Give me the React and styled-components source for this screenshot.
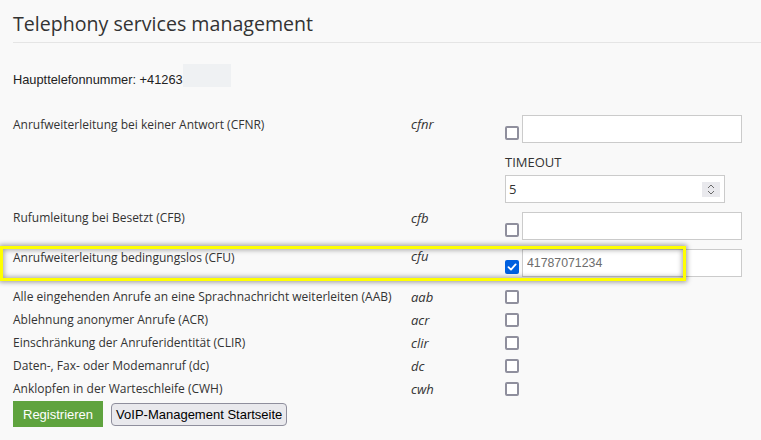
import React from 'react';
import styled, { createGlobalStyle } from 'styled-components';

const Global = createGlobalStyle`
  html, body { margin: 0; padding: 0; background: #f9f9f9; }
  body { font-family: 'Open Sans', sans-serif; color: #333; }
  * { box-sizing: border-box; }
`;

const Page = styled.div`
  width: 761px;
  height: 440px;
  overflow: hidden;
  padding-left: 13px;
`;

const Title = styled.h1`
  margin: 0;
  padding: 10px 0 4px;
  font-family: 'Open Sans', sans-serif;
  font-weight: 400;
  font-size: 19.6px;
  line-height: 28px;
  color: #333;
  border-bottom: 1px solid #e5e5e5;
`;

const PhoneRow = styled.div`
  display: flex;
  align-items: flex-end;
  height: 23px;
  margin-top: 21px;
  font-family: 'Liberation Sans', Arial, sans-serif;
  font-size: 12.8px;
  line-height: 15px;
  color: #222;
`;

const Redacted = styled.span`
  display: inline-block;
  width: 48px;
  height: 23px;
  background: #eff1f3;
`;

const Row = styled.div`
  position: relative;
  display: grid;
  grid-template-columns: 398px 94px 1fr;
  align-items: ${p => (p.$center ? 'center' : 'start')};
  margin-top: ${p => p.$top || 0}px;
  min-height: ${p => p.$height || 0}px;
`;

const Label = styled.div`
  font-size: 12px;
  line-height: 18px;
  color: #333;
  margin-top: ${p => p.$offset || 0}px;
`;

const Code = styled.div`
  font-style: italic;
  font-size: 13px;
  line-height: 18px;
  color: #333;
  margin-top: ${p => p.$offset || 0}px;
`;

const Controls = styled.div`
  display: flex;
  flex-direction: column;
  align-items: flex-start;
  margin-top: ${p => p.$offset || 0}px;
`;

const InputLine = styled.div`
  display: flex;
  align-items: flex-end;
`;

const Check = styled.span`
  display: inline-flex;
  align-items: center;
  justify-content: center;
  width: 14px;
  height: 14px;
  margin: 0 3px ${p => (p.$inline ? 3 : 0)}px 0;
  border: ${p => (p.$checked ? 'none' : '2px solid #8f8f9d')};
  border-radius: 2px;
  background: ${p => (p.$checked ? '#0060df' : '#fff')};
`;

const TextInput = styled.input`
  width: 220px;
  height: 28px;
  margin: 0;
  padding: 0 4px;
  border: 1px solid #cbcbcb;
  background: #fff;
  font-family: 'Liberation Sans', Arial, sans-serif;
  font-size: 12.3px;
  color: #6d6d6d;
  outline: none;
`;

const FieldCaption = styled.div`
  margin-top: 10px;
  font-size: 13px;
  line-height: 18px;
  color: #333;
`;

const NumberBox = styled.div`
  display: flex;
  align-items: center;
  width: 220px;
  height: 28px;
  margin-top: 4px;
  padding: 0 4px 0 3px;
  border: 1px solid #cbcbcb;
  background: #fff;
`;

const NumberValue = styled.input`
  flex: 1;
  min-width: 0;
  border: none;
  padding: 0;
  background: transparent;
  font-family: 'Open Sans', sans-serif;
  font-size: 13px;
  color: #333;
  outline: none;
`;

const Spinner = styled.span`
  display: inline-flex;
  align-items: center;
  justify-content: center;
  width: 18px;
  height: 15px;
  background: #e9e9ed;
`;

const Highlight = styled.div`
  position: absolute;
  left: -13px;
  top: -3px;
  width: 686px;
  height: 35px;
  border: 3px solid #ffff00;
  box-shadow: 0 0 5px 1px rgba(0, 0, 0, 0.4), inset 0 0 5px 1px rgba(0, 0, 0, 0.35);
  pointer-events: none;
`;

const Buttons = styled.div`
  display: flex;
  align-items: center;
  gap: 8px;
  height: 28px;
`;

const PrimaryButton = styled.button`
  height: 26px;
  padding: 0 10px;
  border: none;
  background: #5fa33e;
  color: #fff;
  font-family: 'Liberation Sans', Arial, sans-serif;
  font-size: 13px;
`;

const SecondaryButton = styled.button`
  height: 23px;
  padding: 0 4px;
  border: 1px solid #8f8f9d;
  border-radius: 4px;
  background: #e9e9ed;
  color: #000;
  font-family: 'Liberation Sans', Arial, sans-serif;
  font-size: 13px;
`;

const CheckBox = ({ checked, inline }) => (
  <Check $checked={checked} $inline={inline}>
    {checked && (
      <svg width="10" height="10" viewBox="0 0 10 10">
        <polyline points="1.5,5.2 4,7.6 8.6,2.4" fill="none" stroke="#fff" strokeWidth="1.8" strokeLinecap="round" strokeLinejoin="round" />
      </svg>
    )}
  </Check>
);

const simpleRows = [
  ['Alle eingehenden Anrufe an eine Sprachnachricht weiterleiten (AAB)', 'aab'],
  ['Ablehnung anonymer Anrufe (ACR)', 'acr'],
  ['Einschränkung der Anruferidentität (CLIR)', 'clir'],
  ['Daten-, Fax- oder Modemanruf (dc)', 'dc'],
  ['Anklopfen in der Warteschleife (CWH)', 'cwh'],
];

export default function App() {
  return (
    <Page>
      <Global />
      <Title>Telephony services management</Title>
      <PhoneRow>
        <span>Haupttelefonnummer: +41263</span>
        <Redacted />
      </PhoneRow>

      <Row $top={28}>
        <Label $offset={1}>Anrufweiterleitung bei keiner Antwort (CFNR)</Label>
        <Code>cfnr</Code>
        <Controls>
          <InputLine>
            <CheckBox inline />
            <TextInput defaultValue="" />
          </InputLine>
          <FieldCaption>TIMEOUT</FieldCaption>
          <NumberBox>
            <NumberValue defaultValue="5" />
            <Spinner>
              <svg width="10" height="13" viewBox="0 0 10 13">
                <polyline points="2,5 5,2 8,5" fill="none" stroke="#6a6a6a" strokeWidth="1" />
                <polyline points="2,8 5,11 8,8" fill="none" stroke="#6a6a6a" strokeWidth="1" />
              </svg>
            </Spinner>
          </NumberBox>
        </Controls>
      </Row>

      <Row $top={6}>
        <Label>Rufumleitung bei Besetzt (CFB)</Label>
        <Code>cfb</Code>
        <Controls $offset={3}>
          <InputLine>
            <CheckBox inline />
            <TextInput defaultValue="" />
          </InputLine>
        </Controls>
      </Row>

      <Row $top={9}>
        <Label>Anrufweiterleitung bedingungslos (CFU)</Label>
        <Code $offset={-2}>cfu</Code>
        <Controls>
          <InputLine>
            <CheckBox checked inline />
            <TextInput defaultValue="41787071234" />
          </InputLine>
        </Controls>
        <Highlight />
      </Row>

      {simpleRows.map(([label, code], i) => (
        <Row key={code} $center $top={i === 0 ? 8 : 0} $height={23}>
          <Label>{label}</Label>
          <Code>{code}</Code>
          <Controls>
            <CheckBox />
          </Controls>
        </Row>
      ))}

      <Buttons>
        <PrimaryButton>Registrieren</PrimaryButton>
        <SecondaryButton>VoIP-Management Startseite</SecondaryButton>
      </Buttons>
    </Page>
  );
}
